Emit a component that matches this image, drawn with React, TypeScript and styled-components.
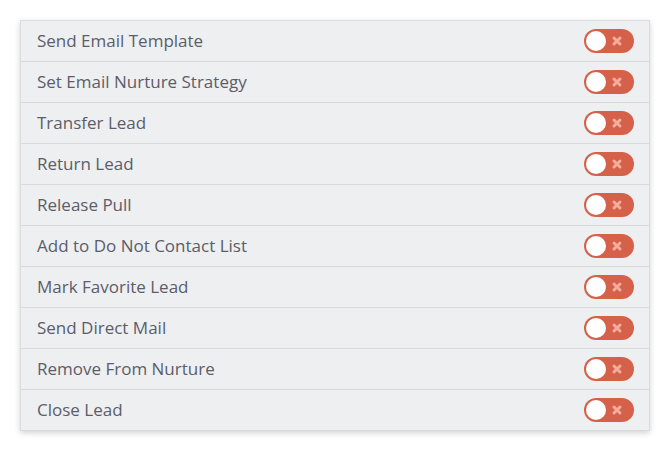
import React from "react";
import styled, { createGlobalStyle } from "styled-components";

const Global = createGlobalStyle`
  html, body { margin: 0; padding: 0; background: #ffffff; }
  body { font-family: "Open Sans", "Liberation Sans", sans-serif; }
`;

const Page = styled.div`
  padding: 20px;
  width: 670px;
  box-sizing: border-box;
`;

const Panel = styled.div`
  width: 630px;
  background: #eeeff1;
  border: 1px solid #dcdcdc;
  border-bottom: none;
  box-shadow: 0 2px 6px rgba(0, 0, 0, 0.18);
  box-sizing: border-box;
`;

const Row = styled.div`
  height: 41px;
  display: flex;
  align-items: center;
  justify-content: space-between;
  padding: 0 15px 0 16px;
  box-sizing: border-box;
  border-bottom: 1px solid #d9d9db;
`;

const Label = styled.span`
  font-size: 17px;
  line-height: 22px;
  margin-bottom: 1px;
  color: #5c5d69;
`;

const Toggle = styled.div`
  width: 50px;
  height: 24px;
  border-radius: 12px;
  background: #d5614a;
  display: flex;
  align-items: center;
  padding: 0 2px;
  box-sizing: border-box;
  position: relative;
`;

const Knob = styled.div`
  width: 20px;
  height: 20px;
  border-radius: 50%;
  background: #ffffff;
`;

const Cross = styled.svg`
  position: absolute;
  right: 11px;
  top: 6px;
`;

const items = [
  "Send Email Template",
  "Set Email Nurture Strategy",
  "Transfer Lead",
  "Return Lead",
  "Release Pull",
  "Add to Do Not Contact List",
  "Mark Favorite Lead",
  "Send Direct Mail",
  "Remove From Nurture",
  "Close Lead",
];

export default function App() {
  return (
    <>
      <Global />
      <Page>
        <Panel>
          {items.map((t) => (
            <Row key={t}>
              <Label>{t}</Label>
              <Toggle>
                <Knob />
                <Cross width="12" height="12" viewBox="0 0 12 12">
                  <path d="M3 3 L9 9 M9 3 L3 9" stroke="#f4ad9d" strokeWidth="3" strokeLinecap="round" />
                </Cross>
              </Toggle>
            </Row>
          ))}
        </Panel>
      </Page>
    </>
  );
}
